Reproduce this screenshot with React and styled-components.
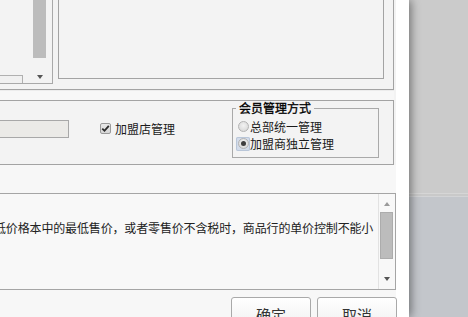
import React from "react";
import styled, { createGlobalStyle } from "styled-components";

const Global = createGlobalStyle`
  html, body { margin: 0; padding: 0; }
  body {
    width: 468px; height: 317px; overflow: hidden;
    font-family: "Noto Sans CJK SC", "Noto Sans", sans-serif;
    font-size: 12px; color: #1a1a1a;
  }
`;

const Screen = styled.div`
  display: flex;
  width: 468px;
  height: 317px;
  overflow: hidden;
`;

const Window = styled.div`
  position: relative;
  z-index: 1;
  width: 409px;
  flex: none;
  background: #ffffff;
  box-shadow: 2px 0 9px rgba(0, 0, 0, 0.45);
`;

const Content = styled.div`
  width: 396px;
  height: 100%;
  display: flex;
  flex-direction: column;
  background: #f3f3f3;
`;

const TopGroup = styled.div`
  width: 393px;
  height: 89px;
  flex: none;
  display: flex;
  align-items: flex-start;
  border-right: 1px solid #a3a3a3;
  border-bottom: 1px solid #a3a3a3;
`;

const ListBox = styled.div`
  width: 52px;
  height: 83px;
  flex: none;
  display: flex;
  border-right: 1px solid #a9a9a9;
  border-bottom: 1px solid #a9a9a9;
`;

const ListLeft = styled.div`
  flex: 1;
  display: flex;
  flex-direction: column;
  justify-content: flex-end;
`;

const HThumb = styled.div`
  width: 22px;
  height: 7px;
  border-top: 1px solid #b0b0b0;
  border-right: 1px solid #b0b0b0;
  background: #f0f0f0;
`;

const VScroll = styled.div`
  width: ${(p) => p.$w || 15}px;
  margin-right: ${(p) => p.$mr || 0}px;
  flex: none;
  display: flex;
  flex-direction: column;
  align-items: center;
  border-left: ${(p) => (p.$line ? "1px solid #e2e2e2" : "none")};
`;

const Thumb = styled.div`
  width: ${(p) => p.$w}px;
  height: ${(p) => p.$h}px;
  margin-top: ${(p) => p.$mt || 0}px;
  background: #bcbcbc;
  border: ${(p) => (p.$border ? "1px solid #acacac" : "none")};
  box-sizing: border-box;
`;

const Grow = styled.div`
  flex: 1;
`;

const Arrow = styled.div`
  width: 0;
  height: 0;
  margin: ${(p) => p.$m || "0"};
  border-left: 3.5px solid transparent;
  border-right: 3.5px solid transparent;
  ${(p) =>
    p.$up
      ? `border-bottom: 4px solid ${p.$c || "#555"};`
      : `border-top: 4px solid ${p.$c || "#555"};`}
`;

const DetailBox = styled.div`
  width: 324px;
  height: 78px;
  margin-left: 5px;
  flex: none;
  border-left: 1px solid #a3a3a3;
  border-right: 1px solid #a3a3a3;
  border-bottom: 1px solid #a3a3a3;
  background: #f3f3f3;
`;

const Band = styled.div`
  width: 394px;
  height: 10px;
  flex: none;
  background: #f7f7f7;
  border-top: 1px solid #ececec;
  box-sizing: border-box;
`;

const OptionsPanel = styled.div`
  width: 393px;
  height: 63px;
  flex: none;
  display: flex;
  align-items: flex-start;
  border-top: 1px solid #a3a3a3;
  border-right: 1px solid #a3a3a3;
  border-bottom: 1px solid #a3a3a3;
  background: #f3f3f3;
`;

const DisabledInput = styled.div`
  width: 68px;
  height: 16px;
  margin-top: 19px;
  flex: none;
  background: #ebeae7;
  border-top: 1px solid #a8a8a8;
  border-right: 1px solid #a8a8a8;
  border-bottom: 1px solid #a8a8a8;
`;

const CheckRow = styled.label`
  display: flex;
  align-items: center;
  gap: 4px;
  height: 16px;
  margin-top: 19px;
  margin-left: 31px;
  white-space: nowrap;
`;

const CheckBox = styled.span`
  width: 11px;
  height: 11px;
  box-sizing: border-box;
  border: 1px solid #9a9a9a;
  border-radius: 2px;
  background: linear-gradient(#e8e8e8, #d6d6d6);
  display: flex;
  align-items: center;
  justify-content: center;
`;

const Fieldset = styled.fieldset`
  margin: 0 14px 0 auto;
  width: 147px;
  height: 57px;
  box-sizing: border-box;
  padding: 3px 0 0 6px;
  border: 1px solid #a9a9a9;
  display: flex;
  flex-direction: column;
  min-width: 0;
`;

const Legend = styled.legend`
  padding: 0 3px;
  margin-left: -3px;
  font-size: 12px;
  line-height: 14px;
  color: #000;
  font-weight: normal;
  -webkit-text-stroke: 0.35px #000;
  white-space: nowrap;
`;

const RadioRow = styled.label`
  display: flex;
  align-items: center;
  height: 17px;
  gap: 0;
  white-space: nowrap;
`;

const RadioWrap = styled.span`
  width: 14px;
  height: 14px;
  margin-left: -3px;
  display: flex;
  align-items: center;
  justify-content: center;
  border-radius: 2px;
  background: ${(p) => (p.$focus ? "#d3dcea" : "transparent")};
  box-shadow: ${(p) => (p.$focus ? "inset 0 0 0 1px #b9c6d8" : "none")};
`;

const RadioCircle = styled.span`
  width: 11px;
  height: 11px;
  box-sizing: border-box;
  border-radius: 50%;
  border: 1px solid #b3b3b3;
  background: radial-gradient(circle at 50% 40%, #f2f2f2, #d4d4d4);
  display: flex;
  align-items: center;
  justify-content: center;
`;

const RadioDot = styled.span`
  width: 5px;
  height: 5px;
  border-radius: 50%;
  background: #3e3e3e;
`;

const Lower = styled.div`
  flex: 1;
  display: flex;
  flex-direction: column;
  background: #f7f7f7;
  padding-top: 28px;
`;

const MessageBox = styled.div`
  width: 395px;
  height: 95px;
  flex: none;
  display: flex;
  border-top: 1px solid #a5a5a5;
  border-right: 1px solid #a5a5a5;
  border-bottom: 1px solid #a5a5a5;
  background: #f8f8f8;
`;

const MessageText = styled.div`
  flex: 1;
  overflow: hidden;
  white-space: nowrap;
  padding-top: 25px;
  line-height: 18px;
  font-size: 12px;
  letter-spacing: -0.15px;
  color: #222;
  text-indent: -6px;
`;

const ButtonRow = styled.div`
  display: flex;
  gap: 6px;
  padding-left: 231px;
  margin-top: 7px;
`;

const Button = styled.button`
  width: 80px;
  height: 30px;
  flex: none;
  border: 1px solid #a9a9a9;
  border-radius: 3px;
  background: linear-gradient(#ffffff, #f1f1f1);
  font-family: "Noto Sans CJK SC", "Noto Sans", sans-serif;
  font-size: 15px;
  color: #333;
  padding: 5px 0 0;
  line-height: 20px;
`;

const Desktop = styled.div`
  flex: 1;
  display: flex;
  flex-direction: column;
`;

const DeskPane = styled.div`
  height: ${(p) => (p.$h ? `${p.$h}px` : "auto")};
  flex: ${(p) => (p.$h ? "none" : "1")};
  background: ${(p) => p.$c};
`;

export default function App() {
  return (
    <>
      <Global />
      <Screen>
        <Window>
          <Content>
            <TopGroup>
              <ListBox>
                <ListLeft>
                  <HThumb />
                </ListLeft>
                <VScroll $w={15} $mr={5}>
                  <Thumb $w={13} $h={58} />
                  <Grow />
                  <Arrow $m="0 0 4px" />
                </VScroll>
              </ListBox>
              <DetailBox />
            </TopGroup>
            <Band />
            <OptionsPanel>
              <DisabledInput />
              <CheckRow>
                <CheckBox>
                  <svg width="9" height="9" viewBox="0 0 9 9">
                    <path d="M1.3 4.6 L3.5 6.8 L7.8 1.8" fill="none" stroke="#2b2b2b" strokeWidth="1.8" />
                  </svg>
                </CheckBox>
                加盟店管理
              </CheckRow>
              <Fieldset>
                <Legend>会员管理方式</Legend>
                <RadioRow>
                  <RadioWrap>
                    <RadioCircle />
                  </RadioWrap>
                  总部统一管理
                </RadioRow>
                <RadioRow>
                  <RadioWrap $focus>
                    <RadioCircle>
                      <RadioDot />
                    </RadioCircle>
                  </RadioWrap>
                  加盟商独立管理
                </RadioRow>
              </Fieldset>
            </OptionsPanel>
            <Lower>
              <MessageBox>
                <MessageText>
                  低价格本中的最低售价，或者零售价不含税时，商品行的单价控制不能小
                </MessageText>
                <VScroll $w={15} $mr={1} $line>
                  <Arrow $up $c="#9a9a9a" $m="8px 0 0" />
                  <Thumb $w={13} $h={47} $mt={6} $border />
                  <Grow />
                  <Arrow $c="#555" $m="0 0 8px" />
                </VScroll>
              </MessageBox>
              <ButtonRow>
                <Button>确定</Button>
                <Button>取消</Button>
              </ButtonRow>
            </Lower>
          </Content>
        </Window>
        <Desktop>
          <DeskPane $h={193} $c="#cbcbcb" />
          <DeskPane $h={1} $c="#d6d6d6" />
          <DeskPane $h={2} $c="#c9c9c9" />
          <DeskPane $h={1} $c="#d3d4d6" />
          <DeskPane $c="#c3c6cb" />
        </Desktop>
      </Screen>
    </>
  );
}
